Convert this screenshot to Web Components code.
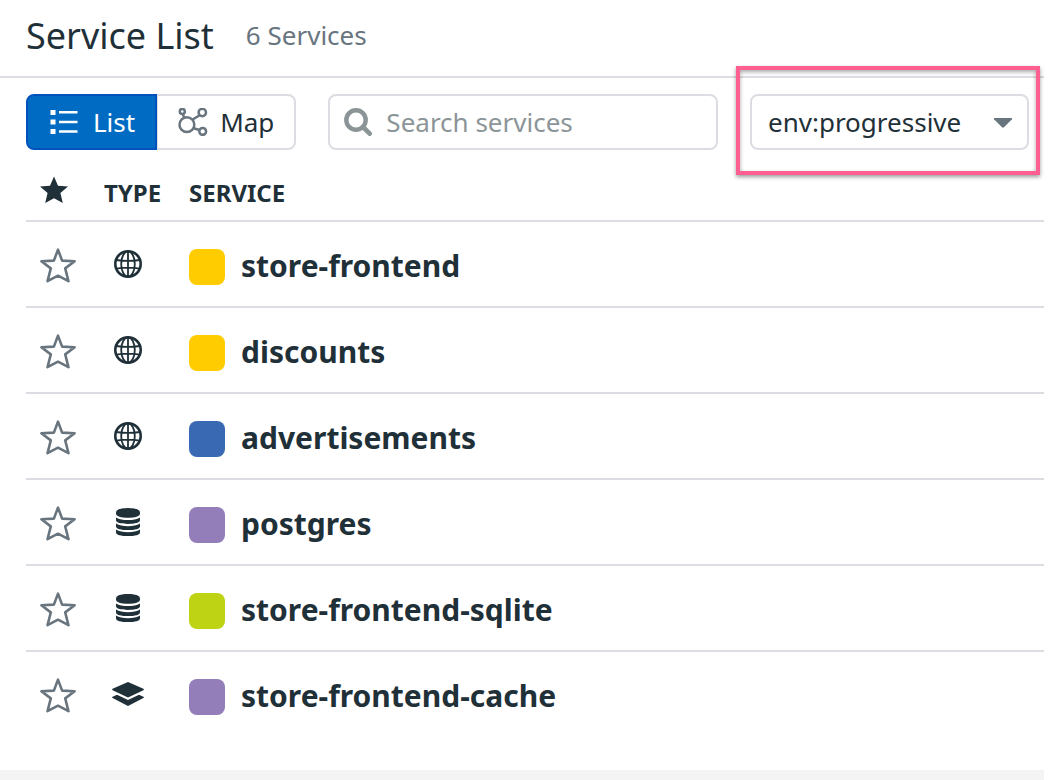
<!DOCTYPE html>
<html lang="en">
<head>
<meta charset="utf-8">
<meta name="viewport" content="width=device-width, initial-scale=1">
<title>Service List</title>
<style>
  :root {
    --ink: #1f3038;
    --muted: #69757e;
    --faint: #8b9598;
    --line: #dcdce2;
    --blue: #006bc2;
    --blue-dark: #0052bd;
    --pink: #ff5f90;
  }
  body { margin: 0; background: #fff; color: var(--ink); font-family: "Noto Sans", "Open Sans", sans-serif; }
</style>
</head>
<body>
<service-page>
  <page-header slot="header" count="6 Services">Service List</page-header>
  <view-switch slot="toolbar"></view-switch>
  <search-box slot="toolbar"></search-box>
  <focus-frame slot="toolbar"><env-select></env-select></focus-frame>
  <service-table></service-table>
</service-page>

<script>
const icons = {
  list: ['0 0 28 28', `<path fill="currentColor" d="M.5 2h5v5h-5zM.5 11.500h5v5h-5zM.5 21h5v5h-5zM9 3h18.500v2.500H9zM9 12.700h18.500v2.500H9zM9 22.200h18.500v2.500H9z"/>`],
  map: ['0 0 30 28', `<g fill="none" stroke="currentColor" stroke-width="2.500"><circle cx="8.900" cy="16.700" r="7.400"/><circle cx="4.300" cy="3.400" r="2.500"/><circle cx="24.300" cy="4.500" r="3.700"/><circle cx="24.700" cy="23.400" r="3.400"/><path d="M5 6l1 3.800M21.700 7.200l-7.500 4.600M15 20l6.400 2"/></g>`],
  search: ['0 0 28 28', `<g fill="none" stroke="currentColor"><circle cx="12" cy="12" r="9.700" stroke-width="4.400"/><path d="M19 19l6.700 6.700" stroke-width="4.600" stroke-linecap="round"/></g>`],
  starFull: ['0 0 28 28', `<path fill="currentColor" d="M14 .5l4 9.300 10 .8-7.600 6.500L22.800 27 14 22.300 5.200 27l2.400-9.900L0 10.600l10-.8z"/>`],
  star: ['0 0 36 36', `<path fill="none" stroke="currentColor" stroke-width="2.600" stroke-linejoin="round" d="M18 2.600l4.100 11 12.500.6-9.400 7.200 3.300 12.800L18 28.700 7.500 34.200l3.300-12.800L1.400 14.200l12.500-.6z"/>`],
  globe: ['0 0 32 28', `<g fill="none" stroke="currentColor" stroke-width="1.800"><circle cx="16" cy="14" r="12.700" stroke-width="2.600"/><ellipse cx="16" cy="14" rx="6.800" ry="12.700"/><path d="M16 1.500v25M4.300 10q11.700 1.800 23.400 0M4.300 18.600q11.700-1.800 23.400 0"/></g>`],
  database: ['0 0 32 28', `<g fill="currentColor"><path d="M4 4.400C4 1.500 9 0 16 0s12 1.500 12 4.400v1.200C28 8.500 23 9.800 16 9.800S4 8.500 4 5.600z"/><path d="M4 9.500c3 2 7 2.600 12 2.600s9-.6 12-2.600v2.800c0 2.400-5 3.600-12 3.600S4 14.700 4 12.300z"/><path d="M4 15.600c3 2 7 2.600 12 2.600s9-.6 12-2.600v2.800c0 2.400-5 3.600-12 3.600S4 20.800 4 18.400z"/><path d="M4 21.600c3 2 7 2.600 12 2.600s9-.6 12-2.600v2.800c0 2.400-5 3.600-12 3.600S4 26.800 4 24.400z"/></g>`],
  layers: ['0 0 32 28', `<g fill="currentColor"><path d="M16 2l15.400 6.800q1 .7 0 1.400L16 17.500.6 10.200q-1-.7 0-1.400z"/><path d="M5 14.700l11 5.200 11-5.200 4.400 2q1 .7 0 1.400L16 26 .6 18.100q-1-.7 0-1.400z"/></g>`]
};

const define = (name, html, setup) => {
  const template = document.createElement('template');
  template.innerHTML = html;
  customElements.define(name, class extends HTMLElement {
    constructor() {
      super();
      this.attachShadow({ mode: 'open' }).append(template.content.cloneNode(true));
    }
    connectedCallback() { if (setup) setup(this, this.shadowRoot); }
  });
};

define('ui-icon', `
  <style>
    :host { display: inline-flex; flex: none; }
    svg { display: block; }
  </style>`, (el, root) => {
  if (root.querySelector('svg')) return;
  const [box, body] = icons[el.getAttribute('name')];
  const [, , w, h] = box.split(' ');
  root.innerHTML += `<svg viewBox="${box}" width="${w}" height="${h}" aria-hidden="true">${body}</svg>`;
});

define('service-page', `
  <style>
    :host { display: flex; flex-direction: column; min-height: 100vh; margin-right: 8px; }
    .toolbar { display: flex; gap: 32px; padding: 16px 15px 0 26px; }
    main { padding: 0 0 32px 26px; }
    footer { flex: 1; min-height: 10px; background: #f4f4f4; }
  </style>
  <slot name="header"></slot>
  <div class="toolbar"><slot name="toolbar"></slot></div>
  <main><slot></slot></main>
  <footer></footer>`);

define('page-header', `
  <style>
    :host { display: block; border-bottom: 2px solid var(--line); }
    header { display: flex; align-items: center; gap: 32px; height: 72px; padding: 0 26px 4px; }
    h1 { margin: 0; font-size: 36px; line-height: 48px; font-weight: 400; }
    span { padding-bottom: 2px; font-size: 26px; line-height: 36px; color: var(--muted); }
  </style>
  <header><h1><slot></slot></h1><span></span></header>`, (el, root) => {
  root.querySelector('span').textContent = el.getAttribute('count');
});

define('view-switch', `
  <style>
    :host { display: flex; flex: none; }
    button { display: flex; align-items: center; box-sizing: border-box; height: 56px; margin: 0; font: inherit; font-size: 26px;
      line-height: 36px; color: var(--ink); background: #fff; border: 2px solid var(--line); cursor: pointer; gap: 12px; padding: 0 20px; }
    .list { border-radius: 8px 0 0 8px; color: #fff; background: var(--blue); border-color: var(--blue-dark); padding: 0 20px 0 22px; gap: 15px; }
    .map { border-radius: 0 8px 8px 0; border-left-width: 1px; }
    .map ui-icon { color: var(--muted); }
  </style>
  <button class="list" type="button" aria-pressed="true"><ui-icon name="list"></ui-icon>List</button>
  <button class="map" type="button" aria-pressed="false"><ui-icon name="map"></ui-icon>Map</button>`);

define('search-box', `
  <style>
    :host { display: block; flex: 1; min-width: 0; }
    label { display: flex; align-items: center; gap: 14px; box-sizing: border-box; height: 56px; padding: 0 14px;
      border: 2px solid var(--line); border-radius: 8px; color: var(--faint); }
    input { flex: 1; min-width: 0; padding: 0; border: 0; outline: 0; background: none; font: inherit; font-size: 26px; line-height: 36px; height: 36px; color: var(--ink); }
    input::placeholder { color: var(--faint); opacity: 1; }
  </style>
  <label><ui-icon name="search"></ui-icon><input type="text" placeholder="Search services" aria-label="Search services"></label>`);

define('focus-frame', `
  <style>
    :host { display: block; position: relative; flex: none; }
    .frame { position: absolute; inset: -28px -11px -25px -14px; border: 4px solid var(--pink); pointer-events: none;
      box-shadow: 0 2px 4px rgba(0,0,0,.4), inset 0 2px 4px rgba(0,0,0,.35); }
  </style>
  <slot></slot><div class="frame"></div>`);

define('env-select', `
  <style>
    :host { display: grid; align-items: center; }
    select, svg { grid-area: 1 / 1; }
    select { appearance: none; box-sizing: border-box; height: 56px; padding: 0 65px 0 16px; margin: 0; border: 2px solid var(--line);
      border-radius: 8px; background: #fff; color: var(--ink); font: inherit; font-size: 26px; line-height: 36px; }
    svg { justify-self: end; margin: 2px 16px 0 0; color: var(--muted); pointer-events: none; }
  </style>
  <select aria-label="Environment"><option>env:progressive</option></select>
  <svg width="20" height="10" viewBox="0 0 20 10" aria-hidden="true"><path fill="currentColor" d="M1.500 0h17q1 .5.500 1.300L11 9.300q-1 .8-2 0L1 1.300Q.5.500 1.500 0z"/></svg>`);

define('service-name', `
  <style>
    :host { display: flex; align-items: center; gap: 16px; font-size: 30px; line-height: 40px; font-weight: 700; }
    i { width: 36px; height: 36px; border-radius: 8px; flex: none; }
    span { padding-bottom: 2px; }
  </style>
  <i></i><span><slot></slot></span>`, (el, root) => {
  root.querySelector('i').style.background = el.getAttribute('color');
});

define('service-table', `
  <style>
    :host { display: block; }
    table { width: 100%; border-collapse: separate; border-spacing: 0; table-layout: fixed; }
    .fav { width: 78px; }
    .type { width: 85px; }
    th { box-sizing: border-box; height: 72px; padding: 16px 0 0; text-align: left; font-size: 24px; line-height: 32px; font-weight: 700; border-bottom: 2px solid var(--line); }
    th:first-child { padding: 10px 0 0 14px; }
    td { box-sizing: border-box; height: 86px; padding: 0; border-bottom: 2px solid var(--line); }
    td:nth-child(2) { padding-left: 8px; }
    td:last-child { padding-top: 6px; }
    tr:last-child td { border-bottom-color: transparent; }
    button { display: block; margin: 2px 0 0 14px; padding: 0; border: 0; background: none; color: var(--muted); cursor: pointer; }
    ui-icon { display: flex; }
  </style>
  <table>
    <colgroup><col class="fav"><col class="type"><col></colgroup>
    <thead><tr><th scope="col" aria-label="Favorite"><ui-icon name="starFull"></ui-icon></th><th scope="col">TYPE</th><th scope="col">SERVICE</th></tr></thead>
    <tbody></tbody>
  </table>`, (el, root) => {
  root.querySelector('tbody').innerHTML = [
    ['globe', '#ffcc00', 'store-frontend'],
    ['globe', '#ffcc00', 'discounts'],
    ['globe', '#3969b3', 'advertisements'],
    ['database', '#937eb9', 'postgres'],
    ['database', '#bfd315', 'store-frontend-sqlite'],
    ['layers', '#937eb9', 'store-frontend-cache']
  ].map(([type, color, name]) => `<tr>
    <td><button type="button" aria-label="Favorite ${name}"><ui-icon name="star"></ui-icon></button></td>
    <td><ui-icon name="${type}"></ui-icon></td>
    <td><service-name color="${color}">${name}</service-name></td></tr>`).join('');
});
</script>
</body>
</html>
